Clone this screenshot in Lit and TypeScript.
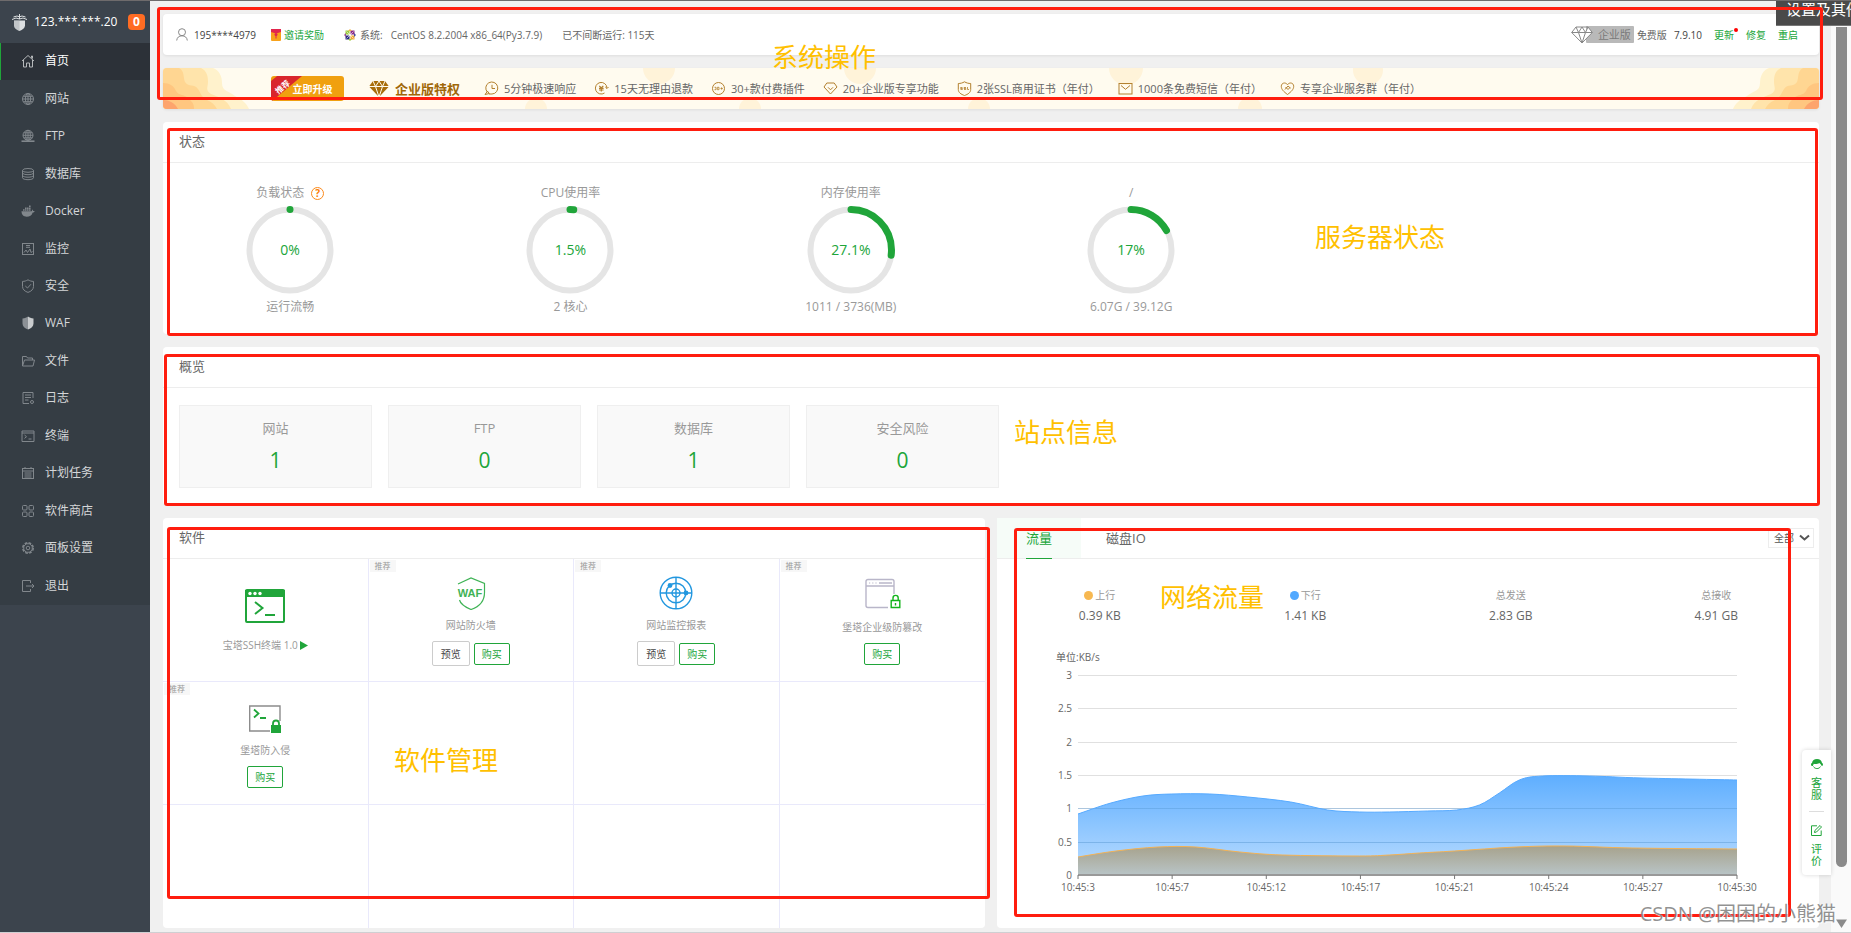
import { LitElement, html, svg, css, nothing } from "lit";
import type { SVGTemplateResult } from "lit";
import { customElement, property, state } from "lit/decorators.js";
import { classMap } from "lit/directives/class-map.js";

type Point = [number, number];

/* ---------- data ---------- */

const MENU: { label: string; icon: string }[] = [
  { label: "首页", icon: "home" },
  { label: "网站", icon: "globe" },
  { label: "FTP", icon: "ftp" },
  { label: "数据库", icon: "db" },
  { label: "Docker", icon: "docker" },
  { label: "监控", icon: "monitor" },
  { label: "安全", icon: "shield" },
  { label: "WAF", icon: "waf" },
  { label: "文件", icon: "folder" },
  { label: "日志", icon: "log" },
  { label: "终端", icon: "terminal" },
  { label: "计划任务", icon: "calendar" },
  { label: "软件商店", icon: "apps" },
  { label: "面板设置", icon: "gear" },
  { label: "退出", icon: "exit" },
];

const PRIVILEGES: { label: string; icon: string }[] = [
  { label: "5分钟极速响应", icon: "clock" },
  { label: "15天无理由退款", icon: "refund" },
  { label: "30+款付费插件", icon: "plugins" },
  { label: "20+企业版专享功能", icon: "gem" },
  { label: "2张SSL商用证书（年付）", icon: "ssl" },
  { label: "1000条免费短信（年付）", icon: "mail" },
  { label: "专享企业服务群（年付）", icon: "heart" },
];

const GAUGES = [
  { title: "负载状态", value: 0, text: "0%", note: "运行流畅", help: true },
  { title: "CPU使用率", value: 1.5, text: "1.5%", note: "2 核心", help: false },
  { title: "内存使用率", value: 27.1, text: "27.1%", note: "1011 / 3736(MB)", help: false },
  { title: "/", value: 17, text: "17%", note: "6.07G / 39.12G", help: false },
];

const COUNTS = [
  { title: "网站", value: 1 },
  { title: "FTP", value: 0 },
  { title: "数据库", value: 1 },
  { title: "安全风险", value: 0 },
];

const SOFTWARE: { name: string; icon: string; recommend: boolean; preview: boolean; buy: boolean; run?: boolean }[] = [
  { name: "宝塔SSH终端 1.0", icon: "ssh", recommend: false, preview: false, buy: false, run: true },
  { name: "网站防火墙", icon: "wafBig", recommend: true, preview: true, buy: true },
  { name: "网站监控报表", icon: "radar", recommend: true, preview: true, buy: true },
  { name: "堡塔企业级防篡改", icon: "pageLock", recommend: true, preview: false, buy: true },
  { name: "堡塔防入侵", icon: "termLock", recommend: true, preview: false, buy: true },
];

const TRAFFIC = [
  { title: "上行", value: "0.39 KB", dot: "up" },
  { title: "下行", value: "1.41 KB", dot: "down" },
  { title: "总发送", value: "2.83 GB", dot: "" },
  { title: "总接收", value: "4.91 GB", dot: "" },
];

const DOWN: Point[] = [
  [0, 139], [33, 128], [65, 121], [94, 119], [132, 119], [170, 122], [213, 127], [250, 135], [282, 137],
  [312, 137], [350, 136], [379, 135], [402, 130], [422, 118], [442, 105], [465, 101], [512, 101], [565, 103], [660, 105],
];
const UP: Point[] = [
  [0, 182], [38, 176], [80, 172], [118, 172], [162, 177], [205, 180], [282, 181], [312, 180], [342, 178],
  [377, 176], [439, 172], [489, 171], [555, 173], [660, 174],
];

/* Smooth line through the samples (Catmull-Rom converted to cubic Bézier). */
function smooth(points: Point[]): string {
  let d = `M${points[0][0]} ${points[0][1]}`;
  for (let i = 0; i < points.length - 1; i++) {
    const p0 = points[Math.max(0, i - 1)];
    const p1 = points[i];
    const p2 = points[i + 1];
    const p3 = points[Math.min(points.length - 1, i + 2)];
    d += `C${p1[0] + (p2[0] - p0[0]) / 6} ${p1[1] + (p2[1] - p0[1]) / 6} ${p2[0] - (p3[0] - p1[0]) / 6} ${p2[1] - (p3[1] - p1[1]) / 6} ${p2[0]} ${p2[1]}`;
  }
  return d;
}

/* ---------- icons ---------- */

const MENU_ICONS: Record<string, SVGTemplateResult> = {
  home: svg`<path d="M1 7 7 1.500 13 7M2.500 6v7h3V9h3v4h3V6M10.500 3.800V2h1v2.600"/>`,
  globe: svg`<circle cx="7" cy="7" r="5.500"/><ellipse cx="7" cy="7" rx="2.600" ry="5.500"/><path d="M1.500 7h11M7 1.500v11M2.300 4.300h9.400M2.300 9.700h9.400"/>`,
  ftp: svg`<circle cx="7" cy="6.300" r="5"/><ellipse cx="7" cy="6.300" rx="2.300" ry="5"/><path d="M2 6.300h10M7 1.300v10M2.800 3.800h8.400M2.800 8.800h8.400"/><path stroke-width="1.600" d="M0.500 12.200h13"/>`,
  db: svg`<ellipse cx="7" cy="3.400" rx="5.500" ry="1.900"/><path d="M1.500 3.400v7.400c0 1 2.400 1.900 5.500 1.900s5.500-.9 5.500-1.900V3.400M1.500 6c.4 1 2.600 1.700 5.500 1.700S12.100 7 12.500 6M1.500 8.500c.4 1 2.600 1.700 5.500 1.700s5.100-.7 5.500-1.700"/>`,
  docker: svg`<path fill="currentColor" stroke="none" d="M.5 7.300h9.800c.7 0 1-.9.7-1.900.9.4 1.200 1 1.200 1.600.5-.1 1-.1 1.500.2-.4.900-1.200 1.200-2 1.200-.9 3-3 4.300-6 4.300C2.600 12.700.6 11 .5 7.300zM2 5.300h1.600v1.500H2zM4 5.300h1.600v1.500H4zM6 5.300h1.600v1.500H6zM8 5.300h1.600v1.500H8zM4 3.400h1.600v1.500H4zM6 3.400h1.600v1.500H6zM8 3.400h1.600v1.500H8zM8 1.500h1.600V3H8z"/>`,
  monitor: svg`<rect x="1.500" y="1.500" width="11" height="11"/><path d="M3 10.500 5 8l1.500 2.500L9 7l1 3.500 1.500-1M5 3.500h4M5 5.300h4"/>`,
  shield: svg`<path d="M7 .8c1.800 1.100 3.500 1.600 5.500 1.600v5c0 3-2.300 5-5.500 6-3.200-1-5.500-3-5.500-6v-5c2 0 3.700-.5 5.500-1.600z"/><path d="M4.300 7 6.500 9l3.500-3.800"/>`,
  waf: svg`<path stroke="none" fill="#8c9196" d="M7 .5v13c-3.200-1-5.500-3-5.500-6v-5C4 2.400 5.500 1.500 7 .5z"/><path stroke="none" fill="#c9ccce" d="M7 .5v13c3.200-1 5.500-3 5.500-6v-5C10 2.400 8.500 1.500 7 .5z"/>`,
  folder: svg`<path d="M1.500 12V2.500h4l1 1.500h5v2M1.500 12 3.500 6h10l-1.500 6z"/>`,
  log: svg`<path d="M12 7V1.500H2v11h6M4 4h6M4 6.500h6M4 9h3.500"/><circle cx="11" cy="11" r="1.500"/>`,
  terminal: svg`<path d="M1 2h12v10.500H1zM1 4h12"/><path d="m3.500 6 2 1.700-2 1.700M7.500 10h3"/>`,
  calendar: svg`<rect x="1.500" y="2.500" width="11" height="10"/><path d="M1.500 5h11M4 1v2M10 1v2M3.500 7h7M3.500 9h7M3.500 11h7"/>`,
  apps: svg`<rect x="1.500" y="1.500" width="4.500" height="4.500" rx="1"/><rect x="8" y="1.500" width="4.500" height="4.500" rx="1"/><rect x="1.500" y="8" width="4.500" height="4.500" rx="1"/><rect x="8" y="8" width="4.500" height="4.500" rx="1"/>`,
  gear: svg`<circle cx="7" cy="7" r="5.200" stroke-dasharray="2.700 1.380" stroke-width="1.600"/><circle cx="7" cy="7" r="4.300"/><circle cx="7" cy="7" r="1.800"/>`,
  exit: svg`<path d="M9.500 4V1.500h-8v11h8V10M5 7h8M11 5l2 2-2 2"/>`,
};

const GOLD_ICONS: Record<string, SVGTemplateResult> = {
  clock: svg`<path d="M3.500 11.200A6 6 0 1 1 8 13H5"/><path d="M8 3.800V7.500h3M1 13.500l2.500-3.300 1.800 2.300z"/>`,
  refund: svg`<path d="M10.500 12A5.800 5.800 0 1 1 13 7M11.300 6l1.700 1.600L14.500 6"/><path stroke-width="1.200" d="M5.300 4.800 7.300 7l2-2.200M5 7.300h4.600M5 9h4.600M7.300 7v3.500"/>`,
  plugins: svg`<circle cx="7.500" cy="7.500" r="6"/><path d="M3.500 6.300h1.500v2.400H3.500M6.300 6.300h1.700v2.400H6.300zM9.500 7.500h2.300M10.650 6.300v2.400" stroke-width=".8"/>`,
  gem: svg`<path d="M3.800 2h7.400L14 6l-6.500 7L1 6z"/><path d="M5 6.300 7.500 8.800 10 6.300"/>`,
  ssl: svg`<path d="M7.500.8C9.500 2 11.500 2.500 13.700 2.500v6c0 3-2.700 4.800-6.200 6-3.500-1.200-6.200-3-6.200-6v-6c2.200 0 4.200-.5 6.200-1.700z"/><path d="M5.500 6.500H3.600v1h1.800v1H3.500M9 6.500H7v1h1.800v1H7M10.500 6v2.500h1.500" stroke-width=".8"/>`,
  mail: svg`<rect x="1" y="2.500" width="13" height="10.500"/><path d="m3 4.500 4.500 3.800L12 4.500"/>`,
  heart: svg`<path d="M7.500 13.500C3.500 10.500 1.300 8.300 1.300 5.300c0-3.500 4.200-4.500 6.200-1.600 2-2.900 6.200-1.900 6.200 1.600 0 3-2.200 5.200-6.200 8.200z"/><path d="M5 8.500 8 5l2.500 2.200M5.500 6 8 8.500l2-2"/>`,
};

const SOFT_ICONS: Record<string, SVGTemplateResult> = {
  ssh: svg`<rect x="1" y="1" width="38" height="32" rx="1" fill="#fff" stroke="#20a53a" stroke-width="2"/><path fill="#20a53a" d="M0 1h40v7H0z"/><g fill="#fff"><circle cx="5" cy="4.500" r="1.700"/><circle cx="10" cy="4.500" r="1.700"/><circle cx="15" cy="4.500" r="1.700"/></g><path fill="none" stroke="#20a53a" stroke-width="2" d="m10 13 7.500 6-7.500 6M20 26h10"/>`,
  wafBig: svg`<g fill="none" stroke="#3fb355" stroke-width="1.200"><path d="M7 8 20 2l13.500 5.500v9c0 9-6 14.500-13.500 17C14 31 9.500 28 8.500 24"/></g><text x="19" y="21" text-anchor="middle" font-family="Liberation Sans" font-weight="700" font-size="11" fill="#3fb355" stroke="#fff" stroke-width="2" paint-order="stroke">WAF</text>`,
  radar: svg`<g fill="none" stroke="#2297df" stroke-width="1.400"><circle cx="20" cy="17" r="15.800"/><circle cx="20" cy="17" r="9.800"/><circle cx="20" cy="17" r="4"/><path d="M20 1v32M4 17h32"/></g><circle cx="14" cy="9.500" r="2.400" fill="#2297df"/><circle cx="30" cy="17" r="2.400" fill="#2297df"/>`,
  pageLock: svg`<path fill="none" stroke="#b9b6c9" stroke-width="1.400" d="M26 29.500H6a2 2 0 0 1-2-2V3.500a2 2 0 0 1 2-2h24a2 2 0 0 1 2 2V16M4 8h28M17 5h13"/><path fill="none" stroke="#b9b6c9" stroke-width="1.200" stroke-dasharray="1.200 2" d="M7 5h9"/><path fill="#fff" stroke="#12b41b" stroke-width="1.400" d="M29.200 22.500h8.600v7h-8.600zM31 22.500V20a2.600 2.600 0 0 1 5.200 0v2.500M33.500 25v2.500"/>`,
  termLock: svg`<path fill="none" stroke="#8c8c8c" stroke-width="1.400" d="M25 30H4.700V5H35v15"/><path fill="none" stroke="#20a53a" stroke-width="1.800" d="m9 8.500 4.500 4L9 16.500M15 17h6"/><path fill="#20a53a" d="M26 24h10v8H26z"/><path fill="none" stroke="#20a53a" stroke-width="1.800" d="M28 24v-1.500a3 3 0 0 1 6 0V24"/>`,
};

/* ---------- gauge ---------- */

@customElement("status-gauge")
export class StatusGauge extends LitElement {
  @property({ type: Number }) value = 0;
  @property() text = "";

  static styles = css`
    :host { display: grid; place-items: center; width: 88px; height: 88px; }
    svg, span { grid-area: 1 / 1; }
    .track { fill: none; stroke: #e5e5e5; stroke-width: 6; }
    .bar { fill: none; stroke: #20a53a; stroke-width: 7; stroke-linecap: round; }
    span { font-size: 14px; line-height: 20px; color: #20a53a; }
  `;

  render() {
    return html`
      <svg width="88" height="88" viewBox="0 0 88 88" aria-hidden="true">
        <circle class="track" cx="44" cy="44" r="40.500"></circle>
        <circle class="bar" cx="44" cy="44" r="40.500" pathLength="100" transform="rotate(-90 44 44)"
          stroke-dasharray="${Math.max(this.value, 0.01)} 200"></circle>
      </svg>
      <span>${this.text}</span>
    `;
  }
}

/* ---------- traffic chart ---------- */

@customElement("traffic-chart")
export class TrafficChart extends LitElement {
  static styles = css`
    :host { display: grid; grid-template-columns: 75px 1fr; column-gap: 6px; padding-right: 82px; font-size: 10px; line-height: 12px; color: #666; }
    .unit { grid-column: 1 / 3; padding-left: 59px; margin-bottom: 6px; }
    .y { display: flex; flex-direction: column; justify-content: space-between; text-align: right; height: 212px; }
    .plot { display: block; width: 100%; height: 206px; margin-top: 6px; overflow: visible; }
    .line { fill: none; vector-effect: non-scaling-stroke; }
    .x { grid-column: 2; display: flex; justify-content: space-between; }
    .x span { width: 0; display: flex; justify-content: center; white-space: nowrap; }
  `;

  render() {
    const down = smooth(DOWN);
    const up = smooth(UP);
    const width = 660;
    return html`
      <div class="unit">单位:KB/s</div>
      <div class="y">${["3", "2.5", "2", "1.5", "1", "0.5", "0"].map((v) => html`<span>${v}</span>`)}</div>
      <svg class="plot" viewBox="0 0 660 206" preserveAspectRatio="none" role="img" aria-label="流量">
        <defs>
          <linearGradient id="down" x1="0" y1="0" x2="0" y2="1">
            <stop offset="0" stop-color="#56aaff" stop-opacity=".95"></stop>
            <stop offset="1" stop-color="#56aaff" stop-opacity=".4"></stop>
          </linearGradient>
          <linearGradient id="up" x1="0" y1="0" x2="0" y2="1">
            <stop offset="0" stop-color="#a89a78" stop-opacity=".85"></stop>
            <stop offset="1" stop-color="#b8c0bd" stop-opacity=".85"></stop>
          </linearGradient>
        </defs>
        ${[0, 1, 2, 3, 4, 5].map((i) => svg`<path class="line" stroke="#e0e0e0" d="M0 ${Math.round((i * 200) / 6) + 0.5}H${width}"></path>`)}
        <path fill="url(#down)" d="${down}V200H0Z"></path>
        ${[4, 5].map((i) => svg`<path class="line" stroke="#5f9fdc" stroke-opacity=".4" d="M0 ${Math.round((i * 200) / 6) + 0.5}H${width}"></path>`)}
        <path fill="url(#up)" d="${up}V200H0Z"></path>
        <path class="line" stroke="#56aaff" d="${down}"></path>
        <path class="line" stroke="#f3b255" d="${up}"></path>
        <path class="line" stroke="#999" stroke-width="2" d="M0 200H${width}"></path>
        ${[0, 1, 2, 3, 4, 5, 6, 7].map((i) => svg`<path class="line" stroke="#777" d="M${(i * width) / 7} 200v4"></path>`)}
      </svg>
      <div class="x">
        ${["10:45:3", "10:45:7", "10:45:12", "10:45:17", "10:45:21", "10:45:24", "10:45:27", "10:45:30"].map((t) => html`<span>${t}</span>`)}
      </div>
    `;
  }
}

/* ---------- page ---------- */

@customElement("app-root")
export class AppRoot extends LitElement {
  @state() private current = 0;
  @state() private tab = 0;

  static styles = css`
    :host {
      display: grid;
      grid-template-columns: 150px 1fr 20px;
      position: relative;
      overflow: hidden;
      min-height: 100vh;
      box-sizing: border-box;
      border-top: 1px solid #6e6b6c;
      border-bottom: 1px solid #cfcfd2;
      background: #f0f0f0;
      font-family: "Open Sans", "Noto Sans CJK SC", sans-serif;
      font-size: 10px;
      color: #666;
    }
    * { box-sizing: border-box; }
    a { color: inherit; text-decoration: none; }
    button, select { font: inherit; cursor: pointer; }
    h1, h2, p, ul { margin: 0; padding: 0; font-weight: 400; }
    svg { flex: none; display: block; }
    .green { color: #20a53a; }

    /* sidebar */
    .side { background: #3c444d; }
    .brand { display: flex; align-items: center; height: 42px; padding: 0 5px 0 12px; gap: 7px; color: #fff; }
    .brand h1 { flex: 1; font-size: 12px; line-height: 18px; white-space: nowrap; }
    .badge { width: 17px; height: 16px; border-radius: 4px; background: #ff6c23; font-size: 12px; font-weight: 700; line-height: 16px; text-align: center; }
    .menu { display: grid; grid-auto-rows: 1fr; height: 562px; background: #353d44; list-style: none; }
    .menu a { display: flex; align-items: center; gap: 10px; height: 100%; padding: 0 0 1px 20px; border-left: 1px solid transparent; font-size: 12px; line-height: 18px; color: #d4d6d8; }
    .menu a.on { background: #2c3138; border-left-color: #20a53a; color: #fff; }
    .menu svg { color: #81878c; fill: none; stroke: currentColor; stroke-width: 1; }
    .menu a.on svg { color: #b5b8ba; }

    /* main column */
    .main { display: flex; flex-direction: column; gap: 13px; padding: 13px 12px 4px 13px; min-width: 0; }
    .card { background: #fff; border-radius: 4px; min-width: 0; }
    .raised { box-shadow: 0 1px 3px rgba(0, 0, 0, 0.08); }
    .bar { display: flex; align-items: center; height: 41px; padding: 0 21px 0 13px; line-height: 16px; white-space: nowrap; }
    .user { display: flex; align-items: center; gap: 6px; color: #444; margin-right: 15px; }
    .gift { display: flex; align-items: center; gap: 3px; margin-right: 20px; }
    .os { display: flex; align-items: center; gap: 4px; margin-right: 20px; }
    .os b { font-weight: 400; margin-left: 4px; }
    .push { margin-left: auto; display: flex; align-items: center; }
    .corp { display: flex; align-items: center; }
    .corp span { margin-left: -7px; padding: 0 3px 0 12px; background: #b9b9b9; border-radius: 1px; color: #7a7a7a; font-size: 11px; line-height: 17px; }
    .corp svg { position: relative; z-index: 1; }
    .edition { margin: 0 7px 0 3px; }
    .version { margin-right: 12px; color: #444; }
    .actions { display: flex; gap: 12px; }
    .actions a { position: relative; }
    .dot { position: absolute; right: -4px; top: 1px; width: 4px; height: 4px; border-radius: 50%; background: #f00; }

    /* banner */
    .banner { position: relative; overflow: hidden; display: flex; align-items: center; height: 41px; padding-left: 108px; background: #fffbef; white-space: nowrap; }
    .deco { position: absolute; left: 0; top: 0; }
    .deco.end { left: auto; right: 0; }
    .upgrade { position: relative; overflow: hidden; width: 73px; height: 25px; padding: 0 0 0 10px; border: 0; border-radius: 3px; background: #f0a00f; color: #fff; font-weight: 700; }
    .ribbon { position: absolute; left: -15px; top: 0; width: 48px; padding-top: 7px; background: #d9262c; font-size: 8px; line-height: 9px; transform: rotate(-40deg); }
    .rights { position: relative; display: flex; align-items: center; gap: 6px; margin: 0 24px 0 25px; color: #9f6708; font-size: 13px; font-weight: 700; line-height: 18px; }
    .perks { position: relative; display: flex; gap: 18px; list-style: none; font-size: 11px; line-height: 16px; }
    .perks li { display: flex; align-items: center; gap: 5px; }
    .perks svg { fill: none; stroke: #b3802f; stroke-width: 1; }

    /* cards */
    .head { height: 41px; padding-left: 16px; border-bottom: 1px solid #ededed; font-size: 13px; line-height: 38px; }
    .gauges { display: grid; grid-template-columns: repeat(6, 1fr); margin: 0 -13px; padding: 21px 0 18px; }
    .gauge { display: flex; flex-direction: column; align-items: center; gap: 4px; font-size: 12px; line-height: 18px; color: #999; }
    .gauge p { display: flex; align-items: center; gap: 7px; }
    .help { width: 13px; height: 13px; border: 1px solid #fb8a1c; border-radius: 50%; color: #fb7d04; font-size: 10px; font-weight: 700; line-height: 11px; text-align: center; }
    .counts { display: flex; gap: 16px; padding: 17px 16px; }
    .count { width: 193px; height: 83px; padding-top: 12px; border: 1px solid #efefef; background: #f9f9f9; text-align: center; }
    .count h2 { font-size: 13px; line-height: 20px; color: #999; }
    .count a { display: block; margin-top: 8px; font-size: 21px; line-height: 28px; }

    .halves { display: grid; grid-template-columns: 1fr 1fr; gap: 12px; }
    .soft { display: grid; grid-template-columns: repeat(4, 1fr); grid-auto-rows: 123px; overflow: hidden; }
    .cell { position: relative; display: flex; flex-direction: column; align-items: center; justify-content: center; padding-top: 2px; border-right: 1px solid #e9e9fb; border-bottom: 1px solid #e9e9fb; }
    .cell:nth-child(4n) { border-right: 0; }
    .cell:nth-child(n + 9) { border-bottom: 0; }
    .cell p { display: flex; align-items: center; gap: 2px; margin-top: 7px; line-height: 16px; color: #999; }
    .cell .wide { margin-top: 14px; }
    .tag { position: absolute; left: 1px; top: 1px; padding: 0 5px; background: #f7f7f7; font-size: 8px; line-height: 12px; color: #999; }
    .btns { display: flex; align-items: center; gap: 4px; margin-top: 8px; }
    .btn { height: 22px; padding: 0 7px; border: 1px solid #20a53a; border-radius: 2px; background: #fff; color: #20a53a; line-height: 18px; }
    .btn.plain { height: 25px; padding: 0 8px; border-color: #ccc; color: #444; }

    .tabs { display: flex; height: 41px; padding-right: 5px; border-bottom: 1px solid #ededed; }
    .tab { position: relative; min-width: 84px; padding: 0 25px; border: 0; background: none; font-size: 13px; line-height: 18px; color: #666; }
    .tab.on { background: #f6fcf8; color: #20a53a; }
    .tab.on::after { content: ""; position: absolute; left: 29px; right: 29px; bottom: -1px; height: 1px; background: #20a53a; }
    .pick { position: relative; margin: 10px 0 0 auto; }
    .pick select { appearance: none; width: 46px; height: 20px; padding: 0 0 0 5px; border: 1px solid #ededed; border-radius: 0; background: #fff; color: #555; }
    .pick svg { position: absolute; right: 4px; top: 6px; pointer-events: none; }
    .totals { display: grid; grid-template-columns: repeat(4, 1fr); padding: 27px 0 25px; text-align: center; }
    .totals p { display: flex; align-items: center; justify-content: center; gap: 2px; line-height: 18px; color: #999; }
    .totals b { display: block; font-weight: 400; font-size: 12px; line-height: 20px; margin-top: 2px; color: #666; }
    .totals i { width: 9px; height: 9px; border-radius: 50%; }
    .totals .up { background: #f7b851; }
    .totals .down { background: #52a9ff; }

    /* scroll rail */
    .rail { display: flex; flex-direction: column; align-items: center; justify-content: space-between; padding: 26px 0 4px; background: #fafafa; }
    .thumb { width: 11px; height: 840px; border-radius: 0 0 6px 6px; background: #8b8b8b; }

    /* floating layers */
    .float { position: absolute; right: 20px; top: 749px; width: 29px; height: 125px; padding: 9px 0; display: flex; flex-direction: column; align-items: center; background: #fff; border-radius: 4px 0 0 4px; box-shadow: 0 0 4px rgba(0, 0, 0, 0.16); font-size: 11px; line-height: 12px; }
    .float a { display: flex; flex-direction: column; align-items: center; gap: 7px; width: 11px; color: #20a53a; text-align: center; }
    .float hr { width: 15px; margin: 10px 0 13px; border: 0; border-top: 1px solid #ddd; }
    .tip { position: absolute; right: 0; top: -1px; width: 75px; height: 26px; padding-left: 10px; overflow: hidden; background: #4a4a4a; border-bottom: 1px solid #777; color: #fff; font-size: 15px; line-height: 19px; white-space: nowrap; }
    .mark { position: absolute; border: 3px solid #ff1d0e; border-radius: 3px; pointer-events: none; }
    .m1 { left: 157px; right: 28px; top: 6px; height: 93px; }
    .m2 { left: 167px; right: 33px; top: 127px; height: 208px; }
    .m3 { left: 164px; right: 31px; top: 353px; height: 152px; }
    .m4 { left: 167px; width: 823px; top: 526px; height: 372px; }
    .m5 { left: 1014px; right: 60px; top: 527px; height: 389px; }
    .note { position: absolute; color: #ffc000; font-size: 26px; line-height: 32px; white-space: nowrap; pointer-events: none; }
    .n1 { left: 772px; top: 40px; }
    .n2 { left: 1315px; top: 220px; }
    .n3 { left: 1014px; top: 415px; }
    .n4 { left: 394px; top: 743px; }
    .n5 { left: 1160px; top: 580px; }
    .credit { position: absolute; right: 15px; top: 898px; font-size: 20px; line-height: 30px; color: rgba(110, 110, 110, 0.75); text-shadow: 1px 1px 1px #fff; white-space: nowrap; pointer-events: none; }
  `;

  private renderSide() {
    return html`
      <nav class="side">
        <div class="brand">
          <svg width="15" height="17" viewBox="0 0 15 17" aria-hidden="true">
            <path fill="#dcdfe1" d="M2 6.500h11v5c0 2.500-2.500 4.300-5.500 5.500C4.500 15.800 2 14 2 11.500z"></path>
            <path fill="#a6abaf" d="M7.500 6.500H2v5c0 2.500 2.500 4.300 5.500 5.500z" opacity=".5"></path>
            <path fill="none" stroke="#dcdfe1" d="M0 5.500 4 4l3.500 1L11 4l4 1.500M1.500 3 5 2l2.500.8L10 2l3.500 1M7.500 0v5"></path>
          </svg>
          <h1>123.***.***.20</h1>
          <span class="badge">0</span>
        </div>
        <ul class="menu">
          ${MENU.map(
            (m, i) => html`<li>
              <a href="#" class=${classMap({ on: i === this.current })} @click=${(e: Event) => { e.preventDefault(); this.current = i; }}>
                <svg width="14" height="14" viewBox="0 0 14 14" aria-hidden="true">${MENU_ICONS[m.icon]}</svg>${m.label}
              </a>
            </li>`
          )}
        </ul>
      </nav>
    `;
  }

  private renderBar() {
    return html`
      <header class="card raised bar">
        <span class="user">
          <svg width="12" height="13" viewBox="0 0 12 13" fill="none" stroke="#888" aria-hidden="true"><circle cx="6" cy="4.200" r="3.500"></circle><path d="M.7 12.500C1 9.500 3 7.800 6 7.800s5 1.700 5.300 4.700"></path></svg>
          195****4979
        </span>
        <a class="gift green" href="#">
          <svg width="10" height="12" viewBox="0 0 10 12" aria-hidden="true"><rect width="10" height="12" rx="1" fill="#f7a21b"></rect><path fill="#e2264d" d="M0 0h10v3L5 4.500 0 3z"></path><circle cx="5" cy="5.500" r="1.500" fill="#e2264d"></circle><path fill="#e2264d" d="M4.500 6h1v3.500h-1z"></path></svg>
          邀请奖励
        </a>
        <span class="os">
          <svg width="12" height="12" viewBox="0 0 12 12" aria-hidden="true"><path fill="#9ccc3c" d="M1.500 1.500h4v4h-4z"></path><path fill="#8c2a86" d="M6.500 1.500h4v4h-4z"></path><path fill="#2c2c80" d="M1.500 6.500h4v4h-4z"></path><path fill="#f0a836" d="M6.500 6.500h4v4h-4z"></path><path fill="#9a4b93" d="m0 6 2-2v4z"></path><path fill="#efb34d" d="m6 0 2 2H4z"></path><path fill="#4a4a9b" d="m12 6-2-2v4z"></path><path fill="#9ccc3c" d="m6 12 2-2H4z"></path><path stroke="#fff" stroke-width=".6" d="m2.500 2.500 7 7M9.500 2.500l-7 7"></path></svg>
          系统: <b>CentOS 8.2.2004 x86_64(Py3.7.9)</b>
        </span>
        <span>已不间断运行: 115天</span>
        <div class="push">
          <span class="corp">
            <svg width="22" height="18" viewBox="0 0 22 18" aria-hidden="true"><path fill="#fff" stroke="#888" d="M5 1h12l4.300 5.500L11 17 .7 6.500zM.7 6.500h20.600M5 1l2.500 5.500L11 17l3.500-10.500L17 1M7.500 6.500 11 1l3.500 5.500"></path></svg>
            <span>企业版</span>
          </span>
          <span class="edition">免费版</span>
          <span class="version">7.9.10</span>
          <span class="actions green">
            <a href="#">更新<i class="dot"></i></a>
            <a href="#">修复</a>
            <a href="#">重启</a>
          </span>
        </div>
      </header>
    `;
  }

  private renderWaves() {
    return svg`
      <path fill="#fff2cc" d="M0 0h50c6 2 9 8 9 15 0 9 8 8 13 13 8 4 12 8 14 13H0z"></path>
      <path fill="#ffe4ab" d="M0 0h38c6 3 7 8 7 14 0 5-3 8 3 12 7 3 16 5 20 15H0z"></path>
      <path fill="#ffd692" d="M0 0h16c6 3 4 10 6 14 4 6 9 1 13 7 3 4 3 8 9 11 5 2 8 5 10 9H0z"></path>
      <path fill="#ffc680" d="M0 15c7 0 11 3 13 8 3 5 8 3 12 7 4 4 6 5 6 11H0z"></path>
      <path fill="#fda46d" d="M0 32c6 0 12 3 15 9H0z"></path>
    `;
  }

  private renderBanner() {
    const dots: [number, number, number][] = [
      [496, 0, 16], [697, 0, 16], [963, 0, 17], [1205, 2, 15], [373, 41, 11], [587, 41, 11], [816, 41, 11], [1087, 41, 12],
    ];
    return html`
      <section class="card raised banner">
        <svg class="deco" width="1240" height="41" viewBox="0 0 1240 41" aria-hidden="true">
          ${dots.map(([x, y, r]) => svg`<circle cx=${x} cy=${y} r=${r} fill="#fff3d9"></circle>`)}
          ${this.renderWaves()}
        </svg>
        <svg class="deco end" width="88" height="41" viewBox="0 0 88 41" aria-hidden="true"><g transform="matrix(-1 0 0 1 88 0)">${this.renderWaves()}</g></svg>
        <button class="upgrade"><span class="ribbon">推荐</span>立即升级</button>
        <div class="rights">
          <svg width="20" height="16" viewBox="0 0 20 16" aria-hidden="true"><path fill="#a86d0a" d="M4 0h12l4 5.500L10 16 0 5.500z"></path><path fill="none" stroke="#fffbef" d="M0 5.500h20M4 0l2.500 5.500L10 16l3.500-10.500L16 0M6.500 5.500 10 0l3.500 5.500"></path></svg>
          企业版特权
        </div>
        <ul class="perks">
          ${PRIVILEGES.map((p) => html`<li><svg width="15" height="15" viewBox="0 0 15 15" aria-hidden="true">${GOLD_ICONS[p.icon]}</svg>${p.label}</li>`)}
        </ul>
      </section>
    `;
  }

  private renderSoftware() {
    const cells = Array.from({ length: 12 }, (_, i) => SOFTWARE[i]);
    return html`
      <section class="card">
        <h2 class="head">软件</h2>
        <div class="soft">
          ${cells.map((s) =>
            s
              ? html`<div class="cell">
                  ${s.recommend ? html`<span class="tag">推荐</span>` : nothing}
                  <svg width="40" height="34" viewBox="0 0 40 34" aria-hidden="true">${SOFT_ICONS[s.icon]}</svg>
                  <p class=${classMap({ wide: !!s.run })}>
                    ${s.name}${s.run ? html`<svg width="8" height="9" viewBox="0 0 8 9" aria-hidden="true"><path fill="#20a53a" d="m0 0 8 4.500L0 9z"></path></svg>` : nothing}
                  </p>
                  ${s.buy
                    ? html`<div class="btns">
                        ${s.preview ? html`<button class="btn plain">预览</button>` : nothing}
                        <button class="btn">购买</button>
                      </div>`
                    : nothing}
                </div>`
              : html`<div class="cell"></div>`
          )}
        </div>
      </section>
    `;
  }

  private renderTraffic() {
    return html`
      <section class="card">
        <div class="tabs">
          ${["流量", "磁盘IO"].map((t, i) => html`<button class=${classMap({ tab: true, on: i === this.tab })} @click=${() => (this.tab = i)}>${t}</button>`)}
          <div class="pick">
            <select aria-label="网卡"><option>全部</option></select>
            <svg width="11" height="8" viewBox="0 0 11 8" aria-hidden="true"><path fill="none" stroke="#555" stroke-width="2" d="m1 1.500 4.500 4 4.500-4"></path></svg>
          </div>
        </div>
        <div class="totals">
          ${TRAFFIC.map((t) => html`<div><p>${t.dot ? html`<i class=${t.dot}></i>` : nothing}${t.title}</p><b>${t.value}</b></div>`)}
        </div>
        <traffic-chart></traffic-chart>
      </section>
    `;
  }

  render() {
    return html`
      ${this.renderSide()}
      <main class="main">
        ${this.renderBar()} ${this.renderBanner()}
        <section class="card">
          <h2 class="head">状态</h2>
          <div class="gauges">
            ${GAUGES.map(
              (g) => html`<div class="gauge">
                <p>${g.title}${g.help ? html`<span class="help">?</span>` : nothing}</p>
                <status-gauge .value=${g.value} .text=${g.text}></status-gauge>
                <p>${g.note}</p>
              </div>`
            )}
          </div>
        </section>
        <section class="card">
          <h2 class="head">概览</h2>
          <div class="counts">
            ${COUNTS.map((c) => html`<div class="count"><h2>${c.title}</h2><a class="green" href="#">${c.value}</a></div>`)}
          </div>
        </section>
        <div class="halves">${this.renderSoftware()} ${this.renderTraffic()}</div>
      </main>
      <div class="rail" aria-hidden="true">
        <div class="thumb"></div>
        <svg width="11" height="9" viewBox="0 0 11 9"><path fill="#8b8b8b" d="M0 .500h11L5.500 9z"></path></svg>
      </div>
      <aside class="float">
        <a href="#">
          <svg width="12" height="11" viewBox="0 0 12 11" aria-hidden="true"><path fill="#20a53a" d="M6 0c2.800 0 4.600 1.600 5 4 .7.200 1 .700 1 1.500S11.500 7 10.700 7c-.4-1-1-2.200-2.400-3C7 5 4 5.400 2.800 4.800 2.300 5.600 2 6.400 1.800 7 .6 7 0 6.500 0 5.500S.4 4.200 1 4c.4-2.400 2.200-4 5-4z"></path><path fill="none" stroke="#20a53a" d="M2.500 7.500C3.500 10 8 10.500 9.500 7.500"></path></svg>
          客服
        </a>
        <hr />
        <a href="#">
          <svg width="11" height="11" viewBox="0 0 11 11" fill="none" stroke="#20a53a" aria-hidden="true"><path d="M6 .8H.5v9.700h9.700V5.500M3.500 7.500l.4-2L9 .5 10.500 2 5.500 7z"></path></svg>
          评价
        </a>
      </aside>
      <div class="tip">设置及其他</div>
      <div class="mark m1"></div>
      <div class="mark m2"></div>
      <div class="mark m3"></div>
      <div class="mark m4"></div>
      <div class="mark m5"></div>
      <span class="note n1">系统操作</span>
      <span class="note n2">服务器状态</span>
      <span class="note n3">站点信息</span>
      <span class="note n4">软件管理</span>
      <span class="note n5">网络流量</span>
      <span class="credit">CSDN @困困的小熊猫</span>
    `;
  }
}
